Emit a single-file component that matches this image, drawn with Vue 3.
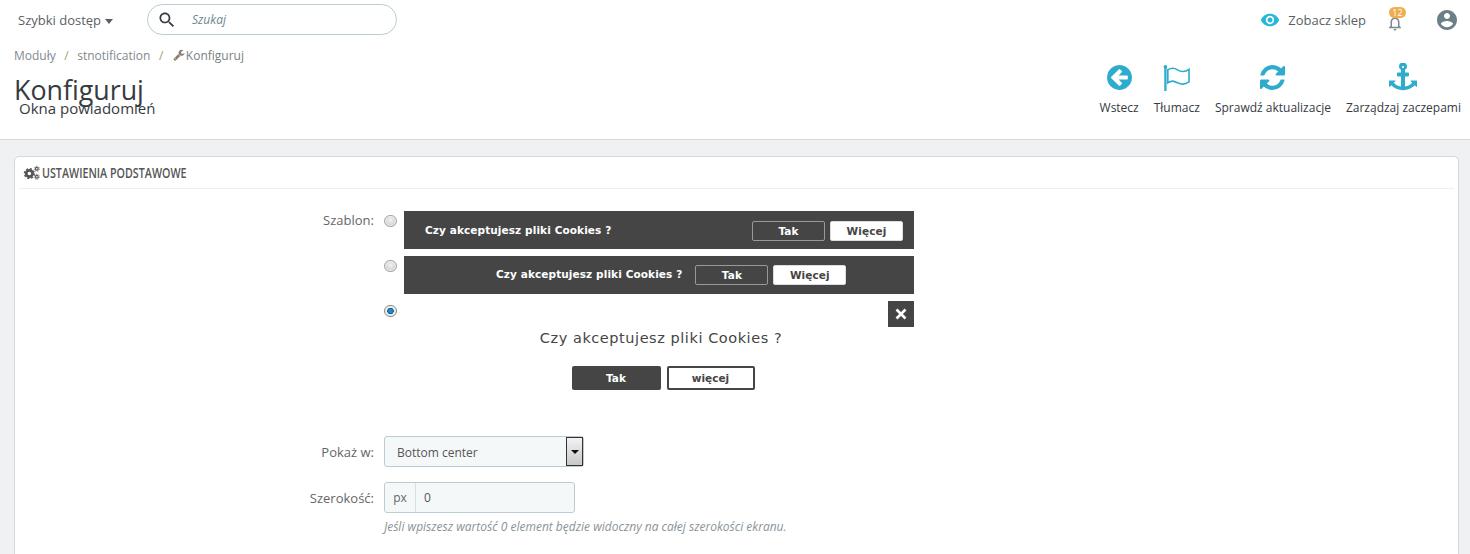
<template>
  <div class="page">
    <header class="head">
      <div class="topbar">
        <div class="quick">Szybki dostęp <span class="caret"></span></div>
        <div class="search">
          <svg class="search-ico" viewBox="0 0 24 24"><path d="M15.5 14h-.79l-.28-.27C15.41 12.59 16 11.11 16 9.5 16 5.91 13.09 3 9.5 3S3 5.91 3 9.5 5.91 16 9.5 16c1.61 0 3.09-.59 4.23-1.57l.27.28v.79l5 4.99L20.49 19l-4.99-5zm-6 0C7.01 14 5 11.99 5 9.5S7.01 5 9.5 5 14 7.01 14 9.5 11.99 14 9.5 14z"/></svg>
          <span class="search-text">Szukaj</span>
        </div>
        <div class="top-right">
          <svg class="eye" viewBox="0 0 24 24"><path d="M12 4.5C7 4.5 2.73 7.61 1 12c1.73 4.39 6 7.5 11 7.5s9.27-3.11 11-7.5c-1.73-4.39-6-7.5-11-7.5zM12 17c-2.76 0-5-2.24-5-5s2.24-5 5-5 5 2.24 5 5-2.24 5-5 5zm0-8c-1.66 0-3 1.34-3 3s1.34 3 3 3 3-1.34 3-3-1.34-3-3-3z"/></svg>
          <span class="shop">Zobacz sklep</span>
          <div class="bell">
            <svg viewBox="0 0 24 24"><path d="M12 22c1.1 0 2-.9 2-2h-4c0 1.1.89 2 2 2zm6-6v-5c0-3.07-1.64-5.64-4.5-6.32V4c0-.83-.67-1.5-1.5-1.5s-1.5.67-1.5 1.5v.68C7.63 5.36 6 7.92 6 11v5l-2 2v1h16v-1l-2-2zm-2 1H8v-6c0-2.48 1.51-4.5 4-4.5s4 2.02 4 4.5v6z"/></svg>
            <span class="badge">12</span>
          </div>
          <svg class="user" viewBox="0 0 24 24"><path d="M12 2C6.48 2 2 6.48 2 12s4.48 10 10 10 10-4.48 10-10S17.52 2 12 2zm0 3c1.66 0 3 1.34 3 3s-1.34 3-3 3-3-1.34-3-3 1.34-3 3-3zm0 14.2c-2.5 0-4.71-1.28-6-3.22.03-1.99 4-3.08 6-3.08 1.99 0 5.97 1.09 6 3.08-1.29 1.94-3.5 3.22-6 3.22z"/></svg>
        </div>
      </div>
      <div class="title-row">
        <div class="title-left">
          <nav class="crumbs">
            <span>Moduły</span><i>/</i><span>stnotification</span><i>/</i>
            <svg class="wrench" viewBox="0 0 1792 1792"><path d="M448 1472q0-26-19-45t-45-19-45 19-19 45 19 45 45 19 45-19 19-45zm644-420l-682 682q-37 37-90 37-52 0-91-37l-106-108q-38-36-38-90 0-53 38-91l681-681q39 98 114.5 173.5t173.5 114.5zm634-435q0 39-23 106-47 134-164.5 217.5t-258.5 83.5q-185 0-316.5-131.5t-131.5-316.5 131.5-316.5 316.5-131.5q58 0 121.5 16.5t107.5 46.5q16 11 16 28t-16 28l-293 169v224l193 107q5-3 79-48.5t135.5-81 70.5-35.5q15 0 23.5 10t8.5 25z"/></svg>
            <span class="cur">Konfiguruj</span>
          </nav>
          <h1>Konfiguruj</h1>
          <div class="sub">Okna powiadomień</div>
        </div>
        <div class="tools">
          <div class="tool">
            <svg viewBox="0 128 1536 1536" class="ti"><path fill-rule="evenodd" d="M1280 960v-128q0-26-19-45t-45-19h-502l189-189q19-19 19-45t-19-45l-91-91q-18-18-45-18t-45 18l-362 362-91 91q-18 18-18 45t18 45l91 91 362 362q18 18 45 18t45-18l91-91q18-18 18-45t-18-45l-189-189h502q26 0 45-19t19-45zm256-64q0 209-103 385.5t-279.5 279.5-385.5 103-385.5-103-279.5-279.5-103-385.5 103-385.5 279.5-279.5 385.5-103 385.5 103 279.5 279.5 103 385.5z"/></svg>
            <span>Wstecz</span>
          </div>
          <div class="tool">
            <svg viewBox="0 0 28 27" class="ti flag"><path d="M2.5 1v26" stroke-width="2.4"/><circle cx="2.5" cy="2" r="1.9" class="dot"/><path d="M5 5c4-2.5 7-2 10 0s8 2.5 12-.5v13c-4 3-8 3-12 1s-6-2.5-10 0z" stroke-width="1.7"/></svg>
            <span>Tłumacz</span>
          </div>
          <div class="tool">
            <svg viewBox="128 128 1536 1536" class="ti"><path d="M1639 1056q0 5-1 7-64 268-268 434.5t-478 166.5q-146 0-282.5-55t-243.5-157l-129 129q-19 19-45 19t-45-19-19-45v-448q0-26 19-45t45-19h448q26 0 45 19t19 45-19 45l-137 137q71 66 161 102t187 36q134 0 250-65t186-179q11-17 53-117 8-23 30-23h192q13 0 22.5 9.5t9.5 22.5zm25-800v448q0 26-19 45t-45 19h-448q-26 0-45-19t-19-45 19-45l138-138q-148-137-349-137-134 0-250 65t-186 179q-11 17-53 117-8 23-30 23h-199q-13 0-22.5-9.5t-9.5-22.5v-7q65-268 270-434.5t480-166.5q146 0 284 55.5t245 156.5l130-129q19-19 45-19t45 19 19 45z"/></svg>
            <span>Sprawdź aktualizacje</span>
          </div>
          <div class="tool">
            <svg viewBox="0 0 1792 1792" class="ti anchor"><path d="M960 256q0-26-19-45t-45-19-45 19-19 45 19 45 45 19 45-19 19-45zm832 888v352q0 22-20 30-8 2-12 2-12 0-23-9l-93-93q-119 143-318.5 226.5t-429.5 83.5-429.5-83.5-318.5-226.5l-93 93q-9 9-23 9-4 0-12-2-20-8-20-30v-352q0-14 9-23t23-9h352q22 0 30 20 8 19-7 35l-100 100q67 91 189.5 153.5t271.5 82.5v-647h-192q-26 0-45-19t-19-45v-128q0-26 19-45t45-19h192v-163q-58-34-93-92.5t-35-128.5q0-106 75-181t181-75 181 75 75 181q0 70-35 128.5t-93 92.5v163h192q26 0 45 19t19 45v128q0 26-19 45t-45 19h-192v647q149-20 271.5-82.5t189.5-153.5l-100-100q-15-16-7-35 8-20 30-20h352q14 0 23 9t9 23z"/></svg>
            <span>Zarządzaj zaczepami</span>
          </div>
        </div>
      </div>
    </header>

    <main class="content">
      <section class="card">
        <div class="card-head">
          <svg class="cogs" viewBox="0 0 16 14">
            <circle cx="6" cy="8" r="3" class="g1"/><circle cx="6" cy="8" r="4.6" class="g2"/>
            <circle cx="13" cy="3.5" r="1.3" class="g3"/><circle cx="13" cy="3.5" r="2.4" class="g4"/>
            <circle cx="13" cy="11" r="1.3" class="g3"/><circle cx="13" cy="11" r="2.4" class="g4"/>
          </svg>
          <span class="card-title">USTAWIENIA PODSTAWOWE</span>
        </div>

        <div class="form">
          <label class="lbl lbl-tpl">Szablon:</label>
          <div class="templates">
            <div class="tpl">
              <input type="radio" name="t" class="radio" />
              <div class="banner b1">
                <span class="bt">Czy akceptujesz pliki Cookies ?</span>
                <span class="spacer"></span>
                <span class="btn ghost">Tak</span>
                <span class="btn solid">Więcej</span>
              </div>
            </div>
            <div class="tpl">
              <input type="radio" name="t" class="radio" />
              <div class="banner b2">
                <span class="bt">Czy akceptujesz pliki Cookies ?</span>
                <span class="btn ghost first">Tak</span>
                <span class="btn solid">Więcej</span>
              </div>
            </div>
            <div class="tpl">
              <input type="radio" name="t" class="radio" checked />
              <div class="modal">
                <span class="close">
                  <svg viewBox="0 0 12 12"><path d="M1.5 1.5l9 9M10.5 1.5l-9 9"/></svg>
                </span>
                <div class="mt">Czy akceptujesz pliki Cookies ?</div>
                <div class="mb">
                  <span class="mbtn dark">Tak</span>
                  <span class="mbtn light">więcej</span>
                </div>
              </div>
            </div>
          </div>

          <label class="lbl lbl-mid">Pokaż w:</label>
          <div class="select">
            <span>Bottom center</span>
            <span class="arrow"><b></b></span>
          </div>

          <label class="lbl lbl-mid">Szerokość:</label>
          <div>
            <div class="group">
              <span class="addon">px</span>
              <span class="val">0</span>
            </div>
            <p class="help">Jeśli wpiszesz wartość 0 element będzie widoczny na całej szerokości ekranu.</p>
          </div>
        </div>
      </section>
    </main>
  </div>
</template>

<script setup>
</script>

<style>
html, body { margin: 0; overflow: hidden; background: #eff1f2; }
</style>

<style scoped>
.page { width: 1470px; height: 554px; overflow: hidden; font-family: "Open Sans", sans-serif; font-size: 13px; color: #555; }
.head { background: #fff; height: 139px; border-bottom: 1px solid #d9d9d9; }
.topbar { display: flex; align-items: center; height: 40px; padding-left: 18px; padding-right: 11px; }
.quick { width: 129px; color: #5a5f66; font-size: 13px; }
.caret { display: inline-block; width: 0; height: 0; border: 4.5px solid transparent; border-top: 5px solid #5a5f66; border-bottom: 0; margin-left: 1px; vertical-align: 1px; }
.search { width: 248px; height: 29px; border: 1px solid #bbcdd2; border-radius: 16px; display: flex; align-items: center; margin-top: -1px; }
.search-ico { width: 20px; height: 20px; margin-left: 9px; fill: #363a41; }
.search-text { margin-left: 15px; font-style: italic; font-size: 12px; color: #6c868e; }
.top-right { margin-left: auto; display: flex; align-items: center; }
.eye { width: 20px; height: 20px; fill: #25b9d7; margin-right: 8px; }
.shop { color: #5a5f66; margin-right: 20px; font-size: 13px; }
.bell { position: relative; width: 18px; height: 18px; margin-right: 31px; margin-top: 5px; }
.bell svg { width: 18px; height: 18px; fill: #7a8a90; display: block; }
.badge { position: absolute; top: -7px; left: 3px; width: 17px; height: 11px; line-height: 11px; border-radius: 6px; background: #f0ad4e; color: #fff; font-size: 9px; text-align: center; }
.user { width: 24px; height: 24px; fill: #6c7f87; }

.title-row { display: flex; justify-content: space-between; padding-left: 14px; padding-right: 9px; }
.crumbs { display: flex; align-items: center; height: 18px; margin-top: 6px; font-size: 12px; color: #828a8e; }
.crumbs i { font-style: normal; color: #a2a070; margin: 0 8.5px; }
.wrench { width: 12px; height: 12px; fill: #8a7d70; margin-left: 1px; margin-right: 1px; }
.cur { color: #7a7f84; }
h1 { margin: 12px 0 0; font-size: 26.8px; font-weight: 400; line-height: 28px; color: #363a41; }
.sub { margin: -5px 0 0 5px; font-size: 15px; line-height: 18px; color: #363a41; }

.tools { display: flex; gap: 15px; padding-top: 25px; }
.tool { display: flex; flex-direction: column; align-items: center; color: #363a41; font-size: 12px; }
.tool span { margin-top: 9px; line-height: 17px; }
.ti { width: 25px; height: 25px; fill: #2eacce; }
.flag { width: 27px; height: 26px; margin-bottom: -1px; fill: none; stroke: #2eacce; }
.flag .dot { fill: #2eacce; stroke: none; }
.anchor { width: 28px; height: 28px; margin-top: -2px; margin-bottom: -1px; }

.content { padding: 16px 11px 0 14px; }
.card { background: #fff; border: 1px solid #d3d8db; border-radius: 5px; height: 420px; padding: 0 4px; box-sizing: border-box; }
.card-head { display: flex; align-items: center; height: 31px; border-bottom: 1px solid #eee; padding-left: 4px; color: #555; }
.card-title { display: inline-block; font-size: 15px; font-weight: 600; line-height: 18px; margin-top: -2px; transform: scaleX(.715); transform-origin: left center; white-space: nowrap; }
.cogs { width: 17px; height: 15px; margin-right: 2px; }
.g1 { fill: none; stroke: #555; stroke-width: 2.6; }
.g2 { fill: none; stroke: #555; stroke-width: 1.4; stroke-dasharray: 1.8 1.8; }
.g3 { fill: none; stroke: #555; stroke-width: 1.1; }
.g4 { fill: none; stroke: #555; stroke-width: .9; stroke-dasharray: 1 1.1; }

.form { display: grid; grid-template-columns: 355px 1fr; column-gap: 10px; padding-top: 22px; }
.lbl { text-align: right; color: #666; font-size: 13px; }
.lbl-tpl { line-height: 18px; }
.lbl-mid { align-self: start; line-height: 33px; }
.templates { display: flex; flex-direction: column; gap: 7px; margin-bottom: 15px; }
.tpl { display: flex; gap: 7.5px; align-items: flex-start; }
.radio { appearance: none; width: 12.5px; height: 12.5px; margin: 3.5px 0 0; border-radius: 50%; border: 1px solid #a5a5a5; background: radial-gradient(circle at 50% 40%, #f2f2f2, #c4c4c4); box-sizing: border-box; box-shadow: inset 0 0 0 1px #f0f0f0; }
.radio:checked { background: radial-gradient(circle, #1f86c8 0 2px, #0f4f85 3px, #eee 3.5px); box-shadow: none; border-color: #888; }
.banner { width: 510px; height: 38px; background: #454545; display: flex; align-items: center; box-sizing: border-box; font-family: "DejaVu Sans", sans-serif; font-size: 10.5px; font-weight: 700; color: #fff; letter-spacing: .1px; }
.b1 { padding: 0 11px 0 21px; }
.b1 .ghost { margin-right: 5px; }
.b1 .btn { margin-top: 2px; }
.b2 { padding-left: 92px; }
.b2 .bt { position: relative; top: -1px; }
.b2 .ghost.first { margin-left: 13px; margin-right: 5px; }
.spacer { flex: 1; }
.btn { width: 71px; height: 18px; line-height: 18px; text-align: center; border-radius: 2px; border: 1px solid transparent; }
.ghost { border-color: #999; }
.solid { background: #fff; color: #454545; border-color: #ddd; }
.modal { position: relative; width: 510px; height: 120px; text-align: center; font-family: "DejaVu Sans", sans-serif; color: #454545; }
.close { position: absolute; top: 0; right: 0; width: 26px; height: 26px; background: #454545; display: flex; align-items: center; justify-content: center; }
.close svg { width: 12px; height: 12px; fill: none; stroke: #fff; stroke-width: 2.6; }
.mt { font-size: 14.5px; letter-spacing: .55px; padding-top: 28px; padding-left: 4px; line-height: 18px; }
.mb { display: flex; justify-content: center; gap: 6px; margin-top: 19px; padding-left: 8px; }
.mbtn { width: 89px; height: 24px; line-height: 24px; border-radius: 2px; box-sizing: border-box; font-size: 10.5px; font-weight: 700; }
.dark { background: #454545; color: #fff; }
.light { width: 88px; background: #fff; border: 2px solid #454545; line-height: 20px; color: #454545; }
.select { width: 200px; height: 31px; box-sizing: border-box; background: #f5f8f9; border: 1px solid #bbcdd2; border-radius: 3px; display: flex; justify-content: space-between; align-items: center; padding-left: 12px; margin-bottom: 15px; font-size: 12px; color: #555; }
.select span:first-child { padding-top: 2px; }
.arrow { width: 17px; height: 29px; background: linear-gradient(#f3f3f3, #c8c8c8); border: 1px solid #333; box-sizing: border-box; display: flex; align-items: center; justify-content: center; }
.arrow b { width: 0; height: 0; border: 4px solid transparent; border-top: 4px solid #111; border-bottom: 0; }
.group { width: 191px; height: 31px; box-sizing: border-box; background: #f5f8f9; border: 1px solid #bbcdd2; border-radius: 3px; display: flex; align-items: center; font-size: 12px; }
.addon { width: 30px; height: 29px; line-height: 29px; border-right: 1px solid #d5e0e3; text-align: center; color: #666; }
.val { padding-left: 8px; }
.help { margin: 6px 0 0; font-size: 12px; font-style: italic; color: #8a9398; line-height: 16px; white-space: nowrap; }
</style>
